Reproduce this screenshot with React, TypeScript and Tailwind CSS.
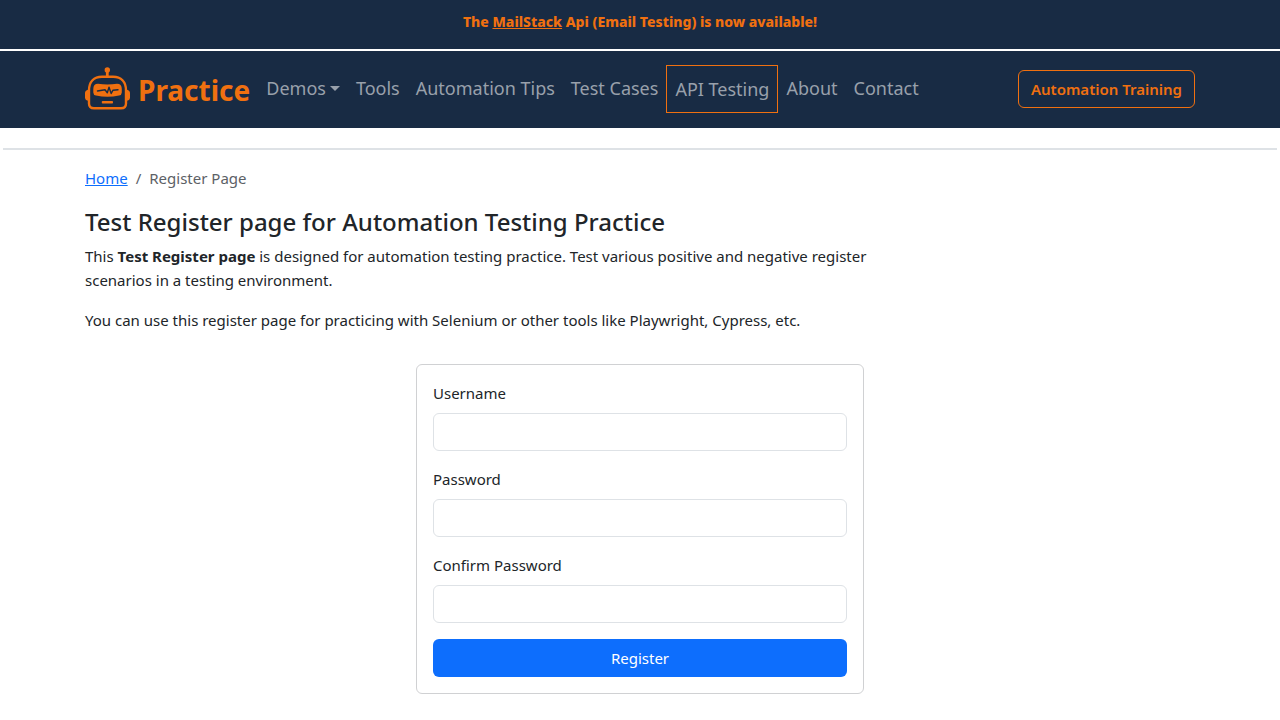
import type { ReactNode } from "react";

function RobotLogo() {
  return (
    <svg width="45" height="44" viewBox="0 0 45 44" fill="none" aria-hidden="true" className="shrink-0">
      <circle cx="22.3" cy="3" r="2.7" fill="#f07010" />
      <path d="M22.3 4v6" stroke="#f07010" strokeWidth="2.8" />
      <path
        d="M4 23.5C4 14.5 9 9.8 17 9.8H28C36 9.8 41 14.5 41 23.5V36.5Q41 41.3 36 41.3H9Q4 41.3 4 36.5Z"
        stroke="#f07010"
        strokeWidth="2.4"
      />
      <path d="M4 22.5Q0 23 0 26V30.5Q0 33.5 4 34Z" fill="#f07010" />
      <path d="M41 22.5Q45 23 45 26V30.5Q45 33.5 41 34Z" fill="#f07010" />
      <path
        d="M13 16.8Q22.5 18 32 16.8Q36.8 16.8 36.8 22V25.5Q36.8 28 34 28.600Q22.5 31 11 28.600Q8.300 28 8.300 25.5V22Q8.300 16.8 13 16.8Z"
        fill="#f07010"
      />
      <path
        d="M12.5 24L17 23.2L20 22.8L22.3 25.8L24 20.2L26.200 26.5L28 23.2L33 22.7"
        stroke="#182b44"
        strokeWidth="1.4"
        strokeLinecap="round"
        strokeLinejoin="round"
      />
      <rect x="16.8" y="34" width="11.2" height="2.6" rx="0.8" fill="#f07010" />
    </svg>
  );
}

function NavItem({ children, boxed = false }: { children: ReactNode; boxed?: boolean }) {
  return (
    <li className={boxed ? "border border-[#f07010]" : ""}>
      <a href="#" className="flex items-center gap-1 px-2 py-2 text-[18px] leading-[30px] whitespace-nowrap text-[#98a0ab]">
        {children}
      </a>
    </li>
  );
}

function Field({ id, label, type }: { id: string; label: string; type: string }) {
  return (
    <div className="mb-4">
      <label htmlFor={id} className="mb-2 block">
        {label}
      </label>
      <input
        id={id}
        type={type}
        className="block h-[38px] w-full rounded-md border border-[#dee2e6] bg-white px-3"
      />
    </div>
  );
}

export default function App() {
  return (
    <div className="bg-white font-['Noto_Sans',sans-serif] text-[15px] leading-6 text-[#212529]">
      <div className="border-b-2 border-white bg-[#182b44] px-4 pt-[10px] pb-[15px] text-center text-[14px] font-extrabold text-[#f07010]">
        The{" "}
        <a href="#" className="underline">
          MailStack
        </a>{" "}
        Api (Email Testing) is now available!
      </div>

      <header className="bg-[#182b44] px-4">
        <nav className="mx-auto flex max-w-[1110px] items-start pt-[14px] pb-[15px]">
          <a href="#" className="mr-2 flex h-12 items-center gap-2 text-[28px] font-bold text-[#f07010]">
            <RobotLogo />
            <span className="pt-0.5">Practice</span>
          </a>
          <ul className="flex items-start">
            <NavItem>
              Demos
              <svg width="10" height="5" viewBox="0 0 10 5" aria-hidden="true">
                <path d="M0 0H10L5 5Z" fill="#98a0ab" />
              </svg>
            </NavItem>
            <NavItem>Tools</NavItem>
            <NavItem>Automation Tips</NavItem>
            <NavItem>Test Cases</NavItem>
            <NavItem boxed>API Testing</NavItem>
            <NavItem>About</NavItem>
            <NavItem>Contact</NavItem>
          </ul>
          <button
            type="button"
            className="mt-[5px] ml-auto h-[38px] rounded-md border border-[#f07010] px-3 text-[15px] font-semibold whitespace-nowrap text-[#f07010]"
          >
            Automation Training
          </button>
        </nav>
      </header>

      <hr className="mx-[3px] mt-5 border-t-2 border-[#dee2e6]" />

      <main className="px-4 pt-4 pb-6">
        <div className="mx-auto max-w-[1110px]">
          <nav aria-label="breadcrumb">
            <ol className="flex gap-2 text-[#5c6166]">
              <li>
                <a href="#" className="text-[#0d6efd] underline">
                  Home
                </a>
              </li>
              <li aria-hidden="true">/</li>
              <li aria-current="page">Register Page</li>
            </ol>
          </nav>
          <div className="max-w-[800px]">
            <h1 className="mt-4 mb-1.5 text-[24px] leading-8 font-medium">
              Test Register page for Automation Testing Practice
            </h1>
            <p>
              This <b>Test Register page</b> is designed for automation testing practice. Test various positive and
              negative register scenarios in a testing environment.
            </p>
            <p className="mt-4">
              You can use this register page for practicing with Selenium or other tools like Playwright, Cypress, etc.
            </p>
          </div>
          <form className="mx-auto mt-8 w-full max-w-[448px] rounded-md border border-[#d0d1d3] p-4">
            <Field id="username" label="Username" type="text" />
            <Field id="password" label="Password" type="password" />
            <Field id="confirmPassword" label="Confirm Password" type="password" />
            <button type="submit" className="h-[38px] w-full rounded-md bg-[#0d6efd] text-white">
              Register
            </button>
          </form>
        </div>
      </main>
    </div>
  );
}
